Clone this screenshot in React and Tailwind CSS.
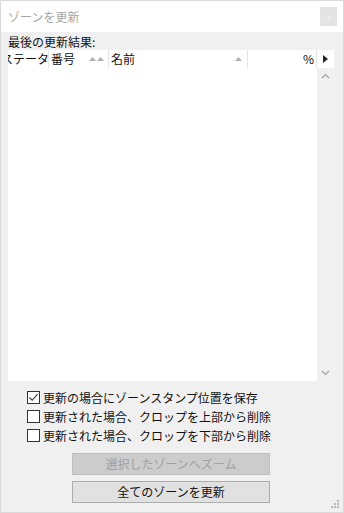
import React from "react";

const font = { fontFamily: '"Noto Sans CJK JP", "Noto Sans", sans-serif' };

function Tri({ className = "" }) {
  return (
    <svg width="7" height="4" viewBox="0 0 7 4" className={className}>
      <polygon points="0,4 3.5,0 7,4" fill="#b0b0b0" />
    </svg>
  );
}

function Check({ checked, label }) {
  return (
    <div className="h-[19px] flex items-center">
      <div className="w-[13px] h-[13px] border border-[#333333] bg-white flex items-center justify-center">
        {checked && (
          <svg width="11" height="11" viewBox="0 0 11 11">
            <polyline points="1.5,5.5 4.2,8.3 9.5,2.2" fill="none" stroke="#333333" strokeWidth="1.1" />
          </svg>
        )}
      </div>
      <span className="ml-[3px] text-[12px] leading-[16px] text-[#111]">{label}</span>
    </div>
  );
}

export default function App() {
  return (
    <div
      className="w-[344px] h-[513px] flex flex-col border border-[#dadada] bg-[#f0f0f0] overflow-hidden relative"
      style={font}
    >
      <div className="h-[31px] bg-white flex items-center justify-between pl-[7px] pr-[6px] shrink-0">
        <span className="text-[12px] leading-[16px] text-[#a6a6a6]">ゾーンを更新</span>
        <div className="w-[17px] h-[19px] bg-[#e4e4e4] flex items-center justify-center">
          <span className="text-[7px] leading-[8px] text-[#f4f4f4]">x</span>
        </div>
      </div>
      <div className="flex-1 flex flex-col pl-[7px] pr-[9px] pt-[2px]">
        <div className="h-[16px] text-[12px] leading-[16px] text-[#111]">最後の更新結果:</div>
        <div className="h-[331px] bg-white flex flex-col shrink-0">
          <div className="h-[18px] flex text-[12px] leading-[16px] text-[#111] shrink-0">
            <div className="w-[40px] overflow-hidden flex items-center">
              <span className="whitespace-nowrap ml-[-7px]">ステータス</span>
            </div>
            <div className="w-[1px] bg-[#e5e5e5]" />
            <div className="w-[59px] flex items-center pl-[2px] pr-[4px] justify-between">
              <span>番号</span>
              <span className="flex gap-[1px]">
                <Tri />
                <Tri />
              </span>
            </div>
            <div className="w-[1px] bg-[#e5e5e5]" />
            <div className="w-[138px] flex items-center pl-[2px] pr-[5px] justify-between">
              <span>名前</span>
              <Tri />
            </div>
            <div className="w-[1px] bg-[#e5e5e5]" />
            <div className="w-[68px] flex items-center justify-end pr-[2px]">
              <span>%</span>
            </div>
            <div className="w-[1px] bg-[#e5e5e5]" />
            <div className="w-[17px] flex items-center justify-center">
              <svg width="5" height="8" viewBox="0 0 5 8">
                <polygon points="0,0 5,4 0,8" fill="#222" />
              </svg>
            </div>
          </div>
          <div className="flex-1 flex">
            <div className="flex-1 bg-white" />
            <div className="w-[17px] bg-[#f0f0f0] flex flex-col justify-between items-center py-[5px]">
              <svg width="9" height="6" viewBox="0 0 9 6">
                <polyline points="1,5 4.5,1.5 8,5" fill="none" stroke="#a3a3a3" strokeWidth="1.2" />
              </svg>
              <svg width="9" height="6" viewBox="0 0 9 6">
                <polyline points="1,1 4.5,4.5 8,1" fill="none" stroke="#a3a3a3" strokeWidth="1.2" />
              </svg>
            </div>
          </div>
        </div>
        <div className="mt-[7px] pl-[19px] flex flex-col">
          <Check checked label="更新の場合にゾーンスタンプ位置を保存" />
          <Check label="更新された場合、クロップを上部から削除" />
          <Check label="更新された場合、クロップを下部から削除" />
        </div>
        <div className="mt-[8px] ml-[64px] w-[198px] h-[22px] bg-[#cccccc] border border-[#bfbfbf] flex items-center justify-center text-[12px] leading-[16px] text-[#a0a0a0]">
          選択したゾーンへズーム
        </div>
        <div className="mt-[6px] ml-[64px] w-[198px] h-[22px] bg-[#e1e1e1] border border-[#adadad] flex items-center justify-center text-[12px] leading-[16px] text-[#111]">
          全てのゾーンを更新
        </div>
      </div>
      <svg className="absolute right-[4px] bottom-[4px]" width="8" height="8" viewBox="0 0 8 8">
        <rect x="6" y="0" width="2" height="2" fill="#b8b8b8" />
        <rect x="3" y="3" width="2" height="2" fill="#b8b8b8" />
        <rect x="6" y="3" width="2" height="2" fill="#b8b8b8" />
        <rect x="0" y="6" width="2" height="2" fill="#b8b8b8" />
        <rect x="3" y="6" width="2" height="2" fill="#b8b8b8" />
        <rect x="6" y="6" width="2" height="2" fill="#b8b8b8" />
      </svg>
    </div>
  );
}
